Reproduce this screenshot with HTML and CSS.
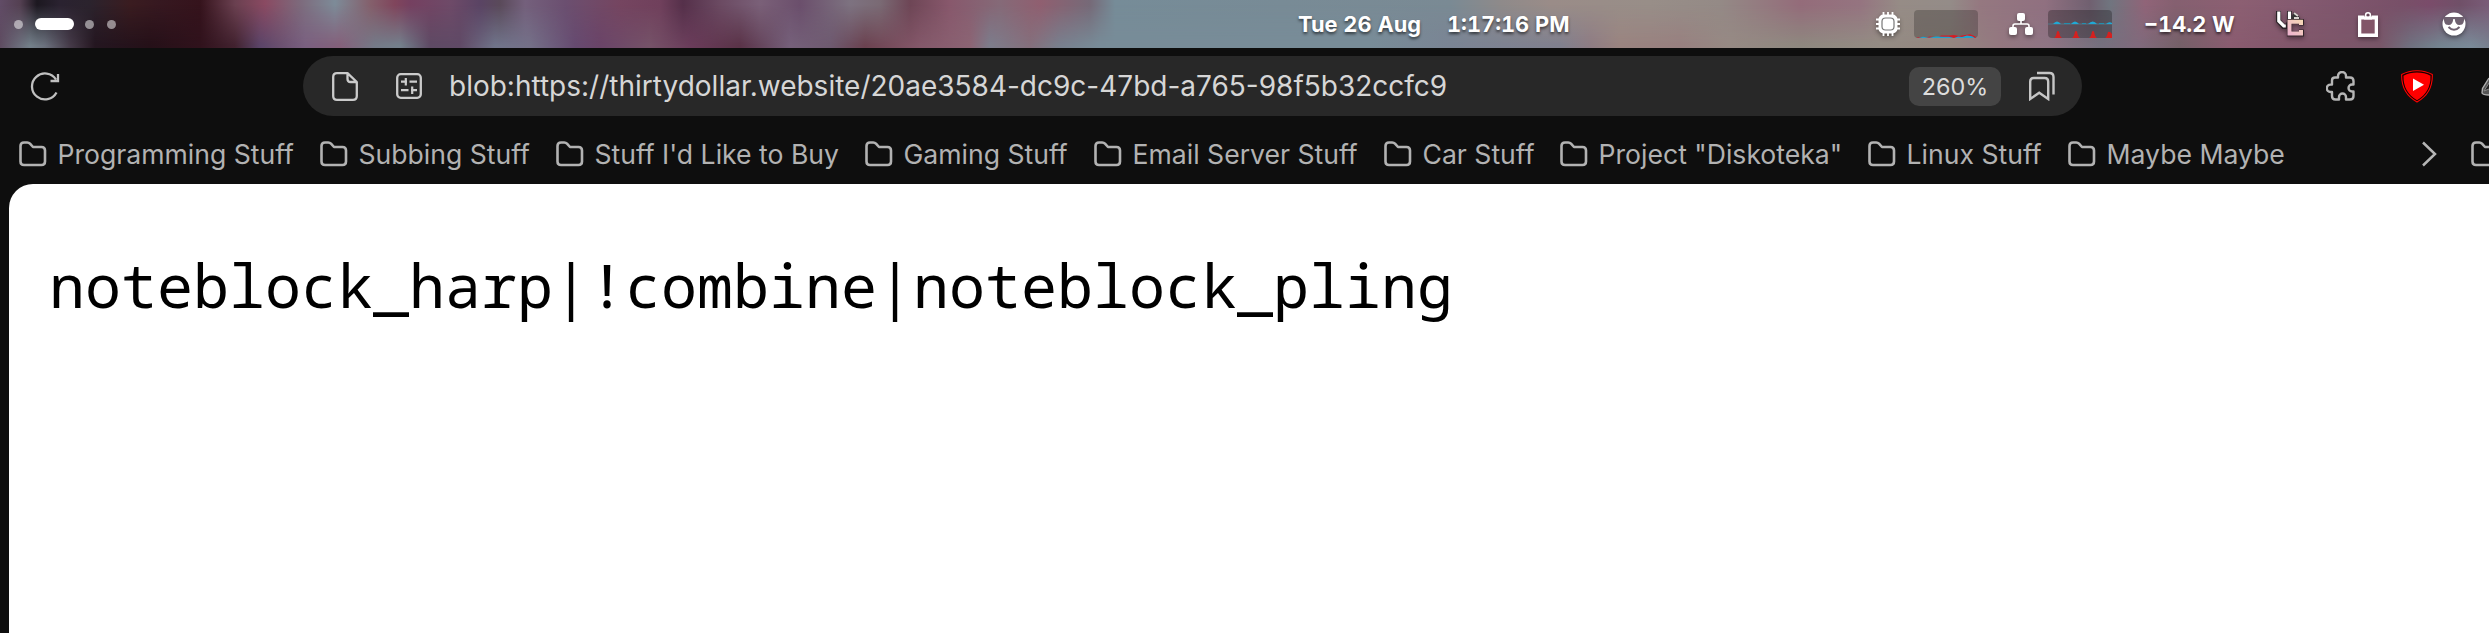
FILE: index.html
```
<!DOCTYPE html>
<html lang="en">
<head>
<meta charset="utf-8">
<title>blob</title>
<link rel="stylesheet" href="styles.css">
</head>
<body>
<svg class="defs" width="0" height="0">
  <symbol id="folder" viewBox="0 0 28 26"><path d="M1.500 6V20.500Q1.500 24 5 24H22.500Q26 24 26 20.500V9.500Q26 6 22.500 6H14L11 2.700Q9.900 1.500 8.200 1.500H5Q1.500 1.500 1.500 5Z" fill="none" stroke="#b2b2b2" stroke-width="2.600" stroke-linejoin="round"/></symbol>
</svg>
<header class="panel">
  <div class="workspaces"><i></i><i class="active"></i><i></i><i></i></div>
  <div class="clock"><span>Tue 26 Aug</span><span>1:17:16 PM</span></div>
  <div class="status">
    <svg class="chip" width="24" height="24" viewBox="0 0 24 24"><path d="M7.500 0v24M12 0v24M16.500 0v24M0 7.500h24M0 12h24M0 16.500h24" stroke="#fff" stroke-width="1.800"/><rect x="2.500" y="2.500" width="19" height="19" rx="5" fill="#fff"/><rect x="6" y="6" width="12" height="12" rx="3.500" fill="#fff" stroke="#777" stroke-width="1.200"/></svg>
    <svg class="graph" width="64" height="28" viewBox="0 0 64 28"><rect width="64" height="28" rx="4" fill="#000" fill-opacity=".22"/><path d="M2 28l3-1 7 .5 4-1 8 1 3-2 8 0 5-.5 5 1 6-1 5-.8 5 2 1 2z" fill="#d51d24"/><path d="M4 28l5-1.200 6 1 7-1.200 7 .2 6 0 5 1.200 4-1.500 4 .5 5-1.600 5 .8 3 1.800z" fill="#1ca5d1"/></svg>
    <svg class="net" width="24" height="24" viewBox="0 0 24 24"><path d="M12 7v5M4 17v-3q0-2 2-2h12q2 0 2 2v3" fill="none" stroke="#fff" stroke-width="1.600"/><rect x="8" y="1" width="8" height="8" rx="2" fill="#fff"/><rect x="0" y="15" width="8" height="8" rx="2" fill="#fff"/><rect x="16" y="15" width="8" height="8" rx="2" fill="#fff"/></svg>
    <svg class="graph" width="64" height="28" viewBox="0 0 64 28"><rect width="64" height="28" rx="4" fill="#000" fill-opacity=".27"/><path d="M0 14h64" stroke="#537788" stroke-width="1"/><path d="M5 14q4-5 8 0zM23 14q4-5 8 0zM40 14q5-5 9 0zM58 14q3-3 6-1v1z" fill="#20a9d5"/><path d="M16 13.500h6M34 13.500h4M51 13.500h5" stroke="#248ead"/><path d="M6 28q2-1 3-6.500 1-1 2 0 1 5.500 3 6.500zM24 28q2-1 3-6.500 1-1 2 0 1 5.500 3 6.500zM41 28q2-1 3-6.500 1-1 2 0 1 5.500 3 6.500zM57 28q2-1 3-6 2-1 4 2v4z" fill="#d5201f"/></svg>
    <span class="watts">−14.2 W</span>
    <svg class="vc" width="28" height="26" viewBox="0 0 28 26"><path d="M2.500 0v10l5 5.500h3l3-4V0" fill="none" stroke="#2a2226" stroke-width="5"/><path d="M2.800 .5v9.500l5 5h2M13.500 .5v9" fill="none" stroke="#fff" stroke-width="3.200"/><path d="M16 5l2-4 4 3 3 5h-9z" fill="#333"/><path d="M18 2l4 3M18 7h5" stroke="#d7d2ce" stroke-width="1.800"/><path d="M25.500 14.500V10.500H13.500v12.500h12v-4.500" fill="none" stroke="#33252b" stroke-width="5.200"/><path d="M25 14V10.800H13.500v11.700H25V19" fill="none" stroke="url(#peach)" stroke-width="4"/><defs><linearGradient id="peach" gradientUnits="userSpaceOnUse" x1="13" y1="24" x2="27" y2="9"><stop stop-color="#eeb2cf"/><stop offset="1" stop-color="#f5d9b4"/></linearGradient></defs></svg>
    <svg class="clip" width="20" height="25" viewBox="0 0 20 25"><path d="M0 3.500h6.500v3h7v-3H20V25H0z" fill="#fff"/><path d="M3.300 7.500h13.400v14H3.300z" fill="#825568"/><circle cx="10" cy="3.200" r="2.400" fill="none" stroke="#fff" stroke-width="1.500"/><path d="M6 4.500h8v3H6z" fill="#fff"/></svg>
    <svg class="face" width="24" height="24" viewBox="0 0 24 24"><circle cx="12" cy="12" r="11.500" fill="#fff"/><path d="M1.500 5h21v1.500l-1 4q-.7 2.500-4.200 2.500Q13.500 13 12.700 7h-1.400q-.8 6-4.600 6-3.500 0-4.200-2.500l-1-4z" fill="#6f6170"/><path d="M6.500 15q5.500 5.600 11 0" fill="none" stroke="#6f6170" stroke-width="2"/></svg>
  </div>
</header>
<section class="browser">
  <div class="toolbar">
    <svg class="reload" width="30" height="30" viewBox="0 0 30 30"><path d="M26.500 21.500A13 13 0 1 1 26 8.500M28 3v7h-7.500" fill="none" stroke="#c0c0c0" stroke-width="2.300"/></svg>
    <div class="address">
      <svg class="file" width="26" height="29" viewBox="0 0 26 29"><path d="M15.500 1.200H5Q1.200 1.200 1.200 5v19q0 3.800 3.800 3.800h16q3.800 0 3.800-3.800V10zM15.500 1.200V7q0 3 3 3h6" fill="none" stroke="#cbcbcb" stroke-width="2.300" stroke-linejoin="round"/></svg>
      <svg class="tune" width="26" height="26" viewBox="0 0 26 26"><rect x="1.200" y="1.200" width="23.600" height="23.600" rx="3.500" fill="none" stroke="#cbcbcb" stroke-width="2.300"/><path d="M5 8.700h6M13.500 8.700H21M9.800 5v7.500M5 17.200h7.500M15 17.200h6M16.200 13.500V21" fill="none" stroke="#cbcbcb" stroke-width="2.200"/></svg>
      <span class="url">blob:https://thirtydollar.website/20ae3584-dc9c-47bd-a765-98f5b32ccfc9</span>
      <span class="zoom">260%</span>
      <svg class="marks" width="26" height="30" viewBox="0 0 26 30"><path d="M1.200 10.500Q1.200 7 4.700 7h11q3.500 0 3.500 3.500V28l-9-6.200-9 6.200z" fill="none" stroke="#c6c6c6" stroke-width="2.400"/><path d="M8 2h12.500q4 0 4 4v17.500" fill="none" stroke="#c6c6c6" stroke-width="2.400"/></svg>
    </div>
    <svg class="puzzle" width="30" height="30" viewBox="0 0 30 30"><path d="M6 9.500Q6 6.500 9 6.500h3V5a4 4 0 0 1 8 0v1.500h4q3.500 0 3.500 3.500v3.500H26a3.300 3.300 0 0 0 0 7h1.500V25q0 3.500-3.500 3.500h-4V26a3.300 3.300 0 0 0-7 0v2.500H9.500Q6 28.500 6 25v-4H4.500a3.700 3.700 0 0 1 0-7.400H6z" fill="none" stroke="#b5b5b5" stroke-width="2.400" stroke-linejoin="round"/></svg>
    <svg class="shield" width="32" height="33" viewBox="0 0 32 33"><path d="M16 .7Q24 .5 31.300 4.500 32 23 16 32 0 23 .7 4.500 8 .5 16 .7z" fill="#130000" stroke="#f00" stroke-width="1.100"/><path d="M16 2.500q7.500 0 13.500 3.200Q30 22 16 30.200 2 22 2.500 5.700 8.500 2.500 16 2.500z" fill="#f00"/><path d="M12 8.500v12.500l11-6.200z" fill="#fff"/></svg>
    <svg class="edge" width="8" height="22" viewBox="0 0 8 22"><path d="M8 3L1.500 13.500 1 18q1 2 7 2" fill="#555" stroke="#b0b0b0" stroke-width="1.400"/><path d="M8 8l-5 8 5-2" fill="#222" stroke="#888"/></svg>
  </div>
  <nav class="bookmarks">
    <a><svg><use href="#folder"/></svg>Programming Stuff</a>
    <a><svg><use href="#folder"/></svg>Subbing Stuff</a>
    <a><svg><use href="#folder"/></svg>Stuff I'd Like to Buy</a>
    <a><svg><use href="#folder"/></svg>Gaming Stuff</a>
    <a><svg><use href="#folder"/></svg>Email Server Stuff</a>
    <a><svg><use href="#folder"/></svg>Car Stuff</a>
    <a><svg><use href="#folder"/></svg>Project "Diskoteka"</a>
    <a><svg><use href="#folder"/></svg>Linux Stuff</a>
    <a><svg><use href="#folder"/></svg>Maybe Maybe</a>
    <a class="more"><svg viewBox="0 0 28 26"><path d="M1 1.500L13 13 1 24.500" fill="none" stroke="#b5b5b5" stroke-width="2.500"/></svg></a>
    <a><svg><use href="#folder"/></svg></a>
  </nav>
  <main class="page"><pre>noteblock_harp|!combine|noteblock_pling</pre></main>
</section>
</body>
</html>
```
FILE: styles.css
```
* { box-sizing: border-box; }
html, body { margin: 0; width: 2489px; height: 633px; overflow: hidden; }
body { display: flex; flex-direction: column; background: #0e0e0e; font-family: Inter, sans-serif; }
svg { display: block; flex: none; }
.defs { position: absolute; }

.panel {
  position: relative; isolation: isolate; height: 48px; flex: none;
  display: grid; grid-template-columns: 1298px 578px 613px; align-items: center;
  color: #fff; font-size: 21.8px; font-weight: 700; font-variant-numeric: tabular-nums;
  background: linear-gradient(90deg, #614c66 0, #544052 20px, #1c1820 37px, #2a2230 60px, #2b232d 90px, #3a1c20 130px, #361820 160px, #35131c 200px, #6a4050 235px, #8a4a62 265px, #7d6a7c 300px, #7d8b98 335px, #84606c 370px, #80455c 395px, #754060 410px, #6e4a68 450px, #5a4464 480px, #5a4a5a 500px, #74607c 525px, #6b4f70 565px, #754560 620px, #70405c 660px, #55304a 683px, #6b4a62 720px, #7a6078 760px, #6b4f6c 800px, #7d7280 850px, #7a6a74 880px, #6e4656 910px, #88586c 950px, #856a78 1000px, #905f70 1040px, #766a78 1090px, #768c98 1115px, #7a8a94 1450px, #8e8a8a 1500px, #9a8c88 1550px, #988e88 1650px, #948a86 1720px, #946c7a 1800px, #957480 1860px, #968c86 1900px, #948c88 1950px, #957880 1980px, #907080 2045px, #706070 2090px, #70757f 2110px, #906478 2145px, #856070 2175px, #8c5f72 2240px, #845a70 2300px, #785068 2400px, #7a4c6a 2430px, #705068 2460px, #7a5c78 2489px);
}
.panel::before {
  content: ""; position: absolute; inset: 0; z-index: -1;
  background: linear-gradient(90deg, #5e4b60 0, #73808a 30px, #6a707c 45px, #453a48 70px, #241620 95px, #251018 150px, #30121c 200px, #42222f 235px, #5a4468 260px, #6a5070 280px, #7a6080 305px, #85607a 340px, #747a88 375px, #74808c 400px, #5e4a64 430px, #604a66 460px, #70748a 495px, #747088 530px, #664a70 575px, #6a4468 600px, #755268 650px, #6a3c5a 690px, #5a3348 740px, #75607a 790px, #6e5a70 830px, #6b4250 865px, #84586a 920px, #8c6474 970px, #7c7d8c 990px, #856f7c 1030px, #78808e 1060px, #788c98 1100px, #788c98 1370px, #7a8494 1450px, #80808e 1560px, #8e7c84 1590px, #9a8480 1620px, #988080 1680px, #968a84 1730px, #8e8880 1800px, #948c84 1880px, #938680 1950px, #947880 2000px, #8e7484 2050px, #75707e 2100px, #806a7c 2140px, #756068 2180px, #8a5c70 2230px, #80566a 2300px, #785668 2380px, #70707f 2410px, #748490 2440px, #7a8a98 2470px, #78808e 2489px);
  -webkit-mask-image: linear-gradient(transparent 10%, #000 95%);
  mask-image: linear-gradient(transparent 10%, #000 95%);
}
.workspaces { display: flex; align-items: center; padding-left: 14px; }
.workspaces i { width: 9px; height: 9px; border-radius: 50%; background: rgba(255, 255, 255, .5); margin-right: 13px; }
.workspaces .active { width: 39px; height: 12px; border-radius: 6px; background: #fff; margin: 0 11px 0 -1px; }
.clock { display: flex; gap: 26px; text-shadow: 0 2px 3px rgba(0, 0, 0, .6); }
.status { display: flex; align-items: center; }
.status svg:not(.graph) { filter: drop-shadow(0 2px 2px rgba(0, 0, 0, .4)); }
.chip { margin-right: 14px; }
.net { margin: 0 15px 0 31px; }
.watts { width: 132px; padding-left: 32px; margin-right: 32px; white-space: nowrap; text-shadow: 0 2px 3px rgba(0, 0, 0, .6); }
.vc { margin-right: 54px; }
.clip { margin-right: 64px; }

.browser { flex: 1; display: flex; flex-direction: column; padding-top: 8px; }
.toolbar { display: flex; align-items: center; height: 60px; padding-left: 30px; flex: none; }
.reload { margin-right: 243px; }
.address { width: 1779px; height: 60px; border-radius: 30px; background: #282828; display: flex; align-items: center; padding-left: 29px; flex: none; }
.file { margin-right: 38px; }
.tune { margin-right: 27px; }
.url { width: 1460px; color: #d6d6d6; font-size: 28px; white-space: nowrap; }
.zoom { width: 92px; height: 39px; border-radius: 10px; background: #444; color: #dcdcdc; font-size: 23.4px; line-height: 40px; text-align: center; }
.marks { margin-left: 28px; }
.puzzle { margin-left: 244px; }
.shield { margin-left: 45px; }
.edge { margin-left: 48px; }

.bookmarks {
  display: grid; grid-template-columns: 301px 236px 309px 229px 290px 176px 308px 200px 354px 49px 28px;
  height: 68px; padding: 7px 0 0 19px; align-items: center; flex: none; overflow: hidden;
}
.bookmarks a { display: flex; align-items: center; gap: 10.5px; color: #b2b2b2; font-size: 26.6px; white-space: nowrap; }
.bookmarks svg { width: 28px; height: 26px; }
.page { flex: 1; margin-left: 9px; border-radius: 24px 0 0 0; background: #fff; }
.page pre { margin: 0; padding: 60px 0 0 40px; font: 60px/82px "Noto Sans Mono", "DejaVu Sans Mono", monospace; color: #000; }
```
